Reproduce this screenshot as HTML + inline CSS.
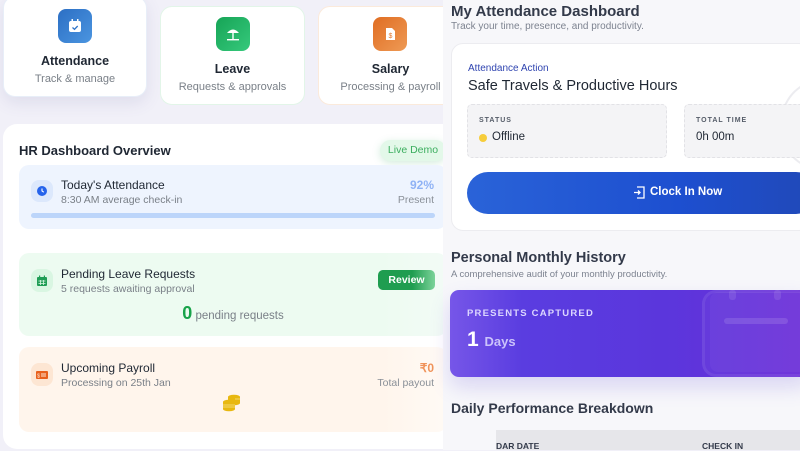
<!DOCTYPE html>
<html><head><style>
*{margin:0;padding:0;box-sizing:border-box}
body{width:800px;height:450px;overflow:hidden;background:#f1f0f8;font-family:"Liberation Sans",sans-serif;position:relative}
.a{position:absolute}
.card{background:#fff;border-radius:12px}
.ic{position:absolute;border-radius:8px}
.t{position:absolute;white-space:nowrap}
</style></head><body>
<!-- top cards -->
<div class="a card" style="left:3px;top:-4px;width:144px;height:101px;box-shadow:0 6px 16px rgba(90,90,160,.12);border:1px solid #e8eef8"></div>
<div class="ic" style="left:58px;top:9px;width:34px;height:34px;background:linear-gradient(135deg,#2c6fc4,#4b95e0)"></div>
<svg class="a" style="left:66px;top:17px" width="18" height="18" viewBox="0 0 18 18"><rect x="3" y="4" width="12" height="11" rx="2" fill="#fff"/><rect x="5.5" y="2" width="1.5" height="4" fill="#fff"/><rect x="11" y="2" width="1.5" height="4" fill="#fff"/><path d="M6.5 10.5l2 1.8 3.2-3.3" stroke="#2f74c8" stroke-width="1.3" fill="none"/></svg>
<div class="t" style="left:0;width:150px;text-align:center;top:54px;font-size:12.5px;font-weight:bold;color:#1f2733">Attendance</div>
<div class="t" style="left:0;width:150px;text-align:center;top:73px;font-size:11px;color:#7a8088">Track &amp; manage</div>

<div class="a card" style="left:160px;top:6px;width:145px;height:99px;border:1px solid #e2f5e8"></div>
<div class="ic" style="left:216px;top:17px;width:34px;height:34px;background:linear-gradient(135deg,#16a456,#36c97c)"></div>
<svg class="a" style="left:224px;top:25px" width="18" height="18" viewBox="0 0 18 18"><path d="M3 8 Q9 1 15 8 Z" fill="#fff"/><rect x="8.3" y="7" width="1.4" height="7" fill="#fff"/><rect x="3" y="14" width="12" height="1.4" fill="#fff"/></svg>
<div class="t" style="left:160px;width:145px;text-align:center;top:62px;font-size:12.5px;font-weight:bold;color:#1f2733">Leave</div>
<div class="t" style="left:160px;width:145px;text-align:center;top:81px;font-size:11px;color:#7a8088">Requests &amp; approvals</div>

<div class="a card" style="left:318px;top:6px;width:140px;height:99px;border:1px solid #fbeadb"></div>
<div class="ic" style="left:373px;top:17px;width:34px;height:34px;background:linear-gradient(135deg,#e06d22,#ee9a55)"></div>
<svg class="a" style="left:381px;top:25px" width="18" height="18" viewBox="0 0 18 18"><path d="M5 3h6l3 3v9H5z" fill="#fff"/><text x="9.5" y="13" font-size="7" fill="#e27a30" text-anchor="middle" font-family="Liberation Sans">$</text></svg>
<div class="t" style="left:318px;width:145px;text-align:center;top:62px;font-size:12.5px;font-weight:bold;color:#1f2733">Salary</div>
<div class="t" style="left:318px;width:145px;text-align:center;top:81px;font-size:11px;color:#7a8088">Processing &amp; payroll</div>

<!-- HR panel -->
<div class="a card" style="left:3px;top:124px;width:460px;height:325px;border-radius:14px"></div>
<div class="t" style="left:19px;top:143px;font-size:13px;font-weight:bold;color:#1f2733">HR Dashboard Overview</div>
<div class="a" style="left:380px;top:140px;width:66px;height:21px;border-radius:11px;background:#e3f8e9;box-shadow:0 2px 8px rgba(80,180,120,.25)"></div>
<div class="t" style="left:380px;width:66px;text-align:center;top:144px;font-size:10.5px;color:#3cae5f">Live Demo</div>

<div class="a" style="left:19px;top:165px;width:428px;height:64px;border-radius:10px;background:#eef4fe"></div>
<div class="ic" style="left:31px;top:180px;width:22px;height:22px;background:#dce8fc"></div>
<svg class="a" style="left:35px;top:184px" width="14" height="14" viewBox="0 0 14 14"><circle cx="7" cy="7" r="5" fill="#2563eb"/><path d="M7 4.5V7l1.8 1.2" stroke="#fff" stroke-width="1.1" fill="none"/></svg>
<div class="t" style="left:61px;top:178px;font-size:12px;color:#1f2733">Today's Attendance</div>
<div class="t" style="left:61px;top:194px;font-size:10.5px;color:#7a8088">8:30 AM average check-in</div>
<div class="t" style="right:366px;top:178px;font-size:12px;font-weight:bold;color:#8fb2f5">92%</div>
<div class="t" style="right:366px;top:194px;font-size:10.5px;color:#8a9098">Present</div>
<div class="a" style="left:31px;top:213px;width:404px;height:5px;border-radius:3px;background:#bcd5fa"></div>

<div class="a" style="left:19px;top:253px;width:428px;height:83px;border-radius:10px;background:linear-gradient(90deg,#edfbf1 85%,#f3fbf6)"></div>
<div class="ic" style="left:31px;top:269px;width:22px;height:23px;background:#d9f6e2"></div>
<svg class="a" style="left:35px;top:274px" width="14" height="14" viewBox="0 0 14 14"><rect x="2" y="3" width="10" height="9" rx="1" fill="#1f9d55"/><rect x="4" y="1.5" width="1.2" height="3" fill="#1f9d55"/><rect x="8.8" y="1.5" width="1.2" height="3" fill="#1f9d55"/><path d="M3.5 7h7M3.5 9.5h7M5.5 6v5M8.5 6v5" stroke="#d9f6e2" stroke-width=".8"/></svg>
<div class="t" style="left:61px;top:267px;font-size:12px;color:#1f2733">Pending Leave Requests</div>
<div class="t" style="left:61px;top:283px;font-size:10.5px;color:#7a8088">5 requests awaiting approval</div>
<div class="a" style="left:378px;top:270px;width:57px;height:20px;border-radius:5px;background:linear-gradient(90deg,#1f9d50 60%,#7cd39a)"></div>
<div class="t" style="left:378px;width:57px;text-align:center;top:274px;font-size:10.5px;font-weight:bold;color:#fff">Review</div>
<div class="t" style="left:19px;width:428px;text-align:center;top:303px;font-size:11.5px;color:#7a8088"><span style="font-size:18px;font-weight:bold;color:#18a34a">0</span> pending requests</div>

<div class="a" style="left:19px;top:347px;width:428px;height:85px;border-radius:10px;background:linear-gradient(90deg,#fff5ec 85%,#fffaf5)"></div>
<div class="ic" style="left:31px;top:363px;width:22px;height:23px;background:#fde6d3"></div>
<svg class="a" style="left:35px;top:368px" width="14" height="14" viewBox="0 0 14 14"><rect x="1" y="3" width="12" height="8" rx="1" fill="#e8601c"/><path d="M6 6h5M6 8h5" stroke="#fde6d3" stroke-width=".9"/><text x="3.5" y="9.3" font-size="5.5" fill="#fde6d3" text-anchor="middle">$</text></svg>
<div class="t" style="left:61px;top:361px;font-size:12px;color:#1f2733">Upcoming Payroll</div>
<div class="t" style="left:61px;top:377px;font-size:10.5px;color:#7a8088">Processing on 25th Jan</div>
<div class="t" style="right:366px;top:361px;font-size:12px;font-weight:bold;color:#f0935a">₹0</div>
<div class="t" style="right:366px;top:377px;font-size:10.5px;color:#8a9098">Total payout</div>
<svg class="a" style="left:222px;top:394px" width="20" height="18" viewBox="0 0 20 18"><g fill="#e8b810"><ellipse cx="12" cy="3" rx="6" ry="2.3"/><rect x="6" y="3" width="12" height="6"/><ellipse cx="12" cy="9" rx="6" ry="2.3"/><ellipse cx="7" cy="8" rx="6" ry="2.3"/><rect x="1" y="8" width="12" height="7"/><ellipse cx="7" cy="15" rx="6" ry="2.3"/></g><path d="M1 11h12M1 13h12M13 5h5" stroke="#fff7d0" stroke-width=".6"/></svg>

<!-- right panel -->
<div class="a" style="left:443px;top:0;width:357px;height:450px;background:#f7f7fa"></div>
<div class="t" style="left:451px;top:3px;font-size:15px;font-weight:bold;color:#333a4a">My Attendance Dashboard</div>
<div class="t" style="left:451px;top:21px;font-size:10px;color:#7d8390">Track your time, presence, and productivity.</div>
<div class="a" style="left:451px;top:43px;width:360px;height:188px;background:#fff;border:1px solid #ececf0;border-radius:12px"></div>
<div class="a" style="left:780px;top:80px;width:80px;height:90px;border:2px solid #ececf0;border-radius:50%"></div>
<div class="t" style="left:468px;top:63px;font-size:10px;color:#2f44b0">Attendance Action</div>
<div class="t" style="left:468px;top:78px;font-size:14.5px;color:#1f2733">Safe Travels &amp; Productive Hours</div>
<div class="a" style="left:467px;top:104px;width:200px;height:54px;background:#f4f4f6;border:1px dashed #e2e2e6;border-radius:5px"></div>
<div class="t" style="left:479px;top:117px;font-size:7px;font-weight:bold;letter-spacing:1px;color:#555c68">STATUS</div>
<div class="a" style="left:479px;top:134px;width:8px;height:8px;border-radius:50%;background:#f6cd3b"></div>
<div class="t" style="left:492px;top:131px;font-size:11.5px;color:#1f2733">Offline</div>
<div class="a" style="left:684px;top:104px;width:130px;height:54px;background:#f4f4f6;border:1px dashed #e2e2e6;border-radius:5px"></div>
<div class="t" style="left:696px;top:117px;font-size:7px;font-weight:bold;letter-spacing:1px;color:#555c68">TOTAL TIME</div>
<div class="t" style="left:696px;top:131px;font-size:11.5px;color:#1f2733">0h 00m</div>
<div class="a" style="left:467px;top:172px;width:350px;height:42px;border-radius:21px;background:linear-gradient(90deg,#2a63d8,#1d4fd0 60%,#2149b8)"></div>
<svg class="a" style="left:633px;top:186px" width="12" height="13" viewBox="0 0 12 13"><path d="M4 1h7v11H4M1 6.5h6M5 4.5l2 2-2 2" stroke="#fff" stroke-width="1.3" fill="none"/></svg>
<div class="t" style="left:650px;top:186px;font-size:11.5px;font-weight:bold;color:#fff">Clock In Now</div>

<div class="t" style="left:451px;top:250px;font-size:14.5px;font-weight:bold;color:#333a4a">Personal Monthly History</div>
<div class="t" style="left:451px;top:269px;font-size:9.5px;color:#7d8390">A comprehensive audit of your monthly productivity.</div>
<div class="a" style="left:450px;top:290px;width:360px;height:87px;border-radius:9px;background:linear-gradient(90deg,#7656e8,#5a3de0 20%,#5b36dc 60%,#6d2ed8);box-shadow:0 10px 20px rgba(100,80,220,.2)"></div>
<div class="a" style="left:702px;top:290px;width:110px;height:87px;border:3px solid rgba(255,255,255,.07);border-radius:14px;background:rgba(255,255,255,.03)"></div>
<div class="a" style="left:710px;top:292px;width:100px;height:80px;border-radius:8px;background:rgba(255,255,255,.04)"></div>
<div class="a" style="left:724px;top:318px;width:64px;height:6px;border-radius:3px;background:rgba(255,255,255,.12)"></div>
<div class="a" style="left:729px;top:290px;width:7px;height:10px;border-radius:3px;background:rgba(255,255,255,.1)"></div>
<div class="a" style="left:774px;top:290px;width:7px;height:10px;border-radius:3px;background:rgba(255,255,255,.1)"></div>
<div class="t" style="left:467px;top:308px;font-size:9.5px;font-weight:bold;letter-spacing:1.2px;color:#dcd6ff">PRESENTS CAPTURED</div>
<div class="t" style="left:467px;top:328px;font-size:21px;font-weight:bold;color:#fff">1 <span style="font-size:13px;color:#cbc3fb">Days</span></div>

<div class="t" style="left:451px;top:400px;font-size:14px;font-weight:bold;color:#333a4a">Daily Performance Breakdown</div>
<div class="a" style="left:496px;top:430px;width:304px;height:20px;background:#e6e6ea"></div>
<div class="t" style="left:496px;top:441px;font-size:8.5px;font-weight:bold;color:#333a4a">DAR DATE</div>
<div class="t" style="left:702px;top:441px;font-size:8.5px;font-weight:bold;color:#333a4a">CHECK IN</div>
</body></html>
